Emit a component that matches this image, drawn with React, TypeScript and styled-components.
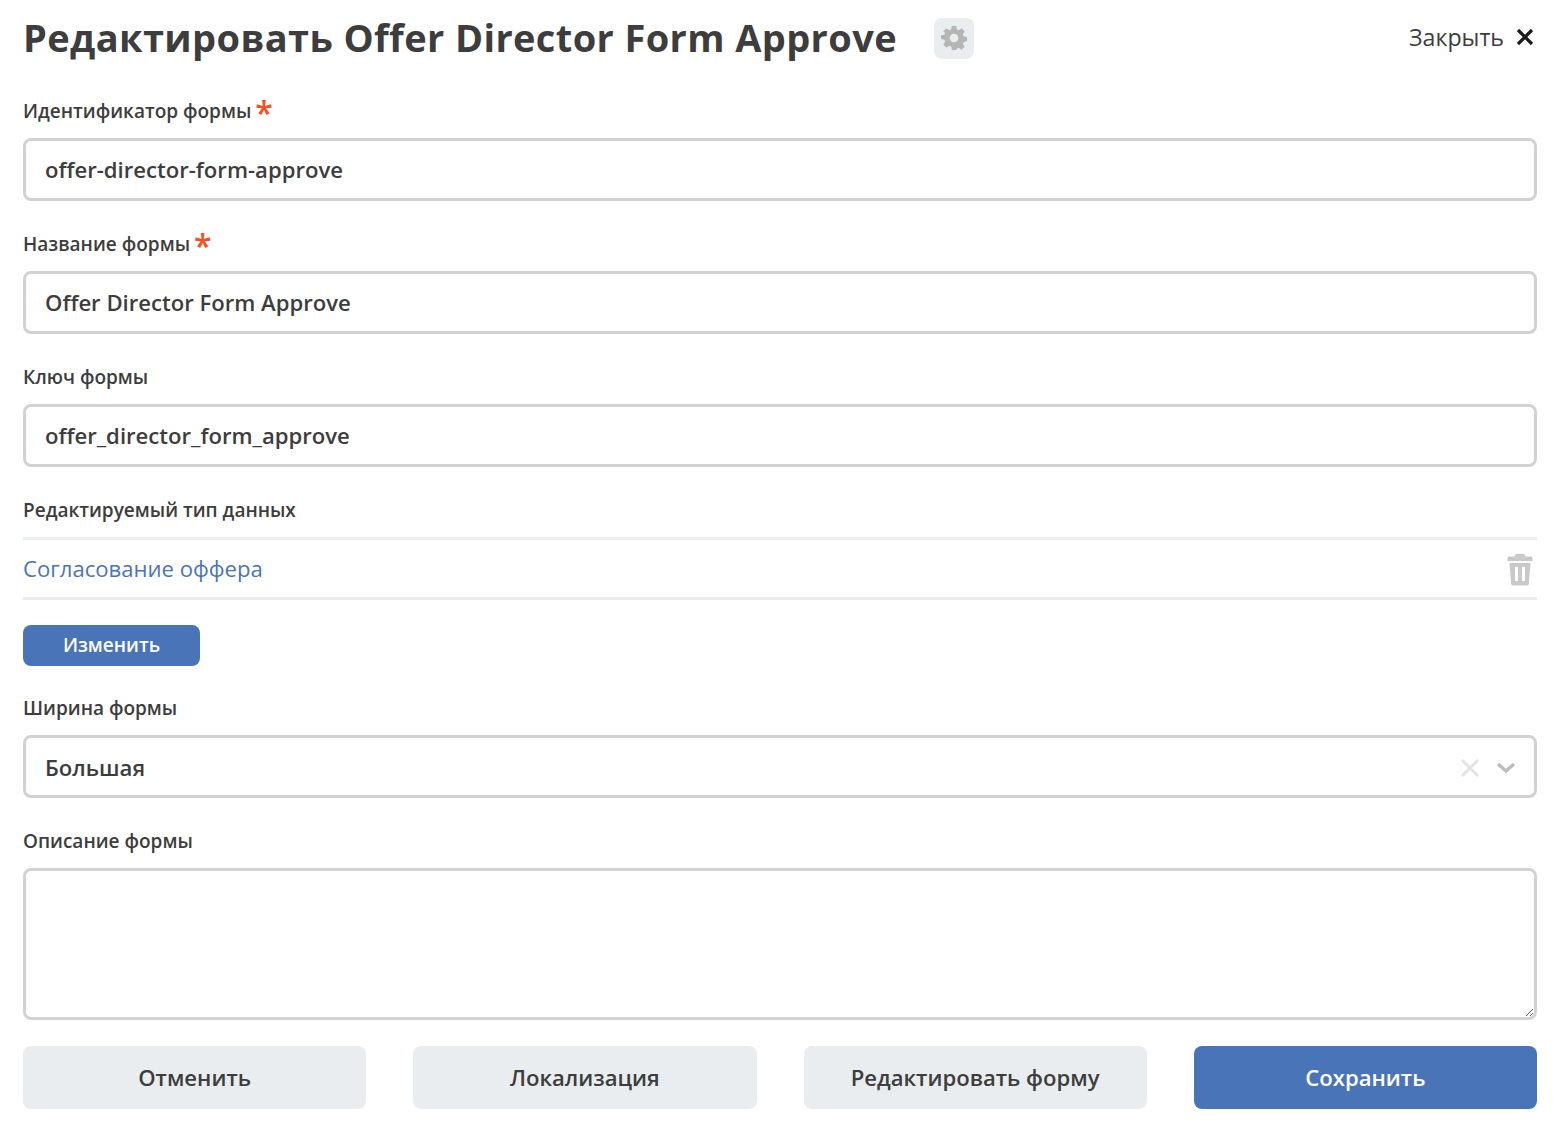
import styled, { createGlobalStyle } from "styled-components";

const GlobalStyle = createGlobalStyle`
  html, body {
    margin: 0;
    padding: 0;
    background: #fff;
    font-family: "Open Sans", "Liberation Sans", sans-serif;
    color: #3d3d3d;
  }
  * { box-sizing: border-box; }
`;

const GearIcon = () => (
  <svg width="26" height="26" viewBox="0 0 24 24" fill="#b5b5b5">
    <path
      fillRule="evenodd"
      d="M10 1h4l.6 3.1 1.8.8L19 3.1 21.9 6l-1.8 2.6.8 1.8 3.1.6v4l-3.1.6-.8 1.8 1.8 2.6-2.9 2.9-2.6-1.8-1.8.8L14 23h-4l-.6-3.1-1.8-.8L5 20.9 2.1 18l1.8-2.6-.8-1.8L0 13V9.5l3.1-.4.8-1.8L2.1 6 5 3.1l2.6 1.8 1.8-.8L10 1zm2 7a4 4 0 1 0 0 8 4 4 0 0 0 0-8z"
    />
  </svg>
);

const TrashSvg = styled.svg`
  margin-top: 2px;
`;

const TrashIcon = () => (
  <TrashSvg width="26" height="32" viewBox="0 0 26 32" fill="#c9c9c9">
    <path d="M10 0h6a1.5 1.5 0 0 1 1.5 2.5H24a1.5 1.5 0 0 1 1.5 1.5v3H.5V4A1.5 1.5 0 0 1 2 2.5h6.5A1.5 1.5 0 0 1 10 0z" />
    <path
      fillRule="evenodd"
      d="M2.5 9h21l-1.6 20.5A2 2 0 0 1 20 31.5H6a2 2 0 0 1-1.9-2L2.5 9zM8 13v14h3V13H8zm7 0v14h3V13h-3z"
    />
  </TrashSvg>
);

const Page = styled.div`
  width: 1559px;
  height: 1122px;
  padding: 0 22px 0 23px;
  display: flex;
  flex-direction: column;
  overflow: hidden;
`;

const Header = styled.header`
  height: 77px;
  display: flex;
  align-items: center;
`;

const Title = styled.h1`
  margin: 0 0 3px;
  font-size: 38px;
  line-height: 52px;
  font-weight: 700;
  letter-spacing: 0.38px;
  color: #3d3d3d;
  white-space: nowrap;
`;

const GearButton = styled.button`
  width: 40px;
  height: 41px;
  margin-left: 37px;
  padding: 0 0 2px;
  border: 0;
  border-radius: 8px;
  background: #e9edef;
  display: flex;
  align-items: center;
  justify-content: center;
`;

const CloseButton = styled.button`
  margin-left: auto;
  margin-right: 2px;
  padding: 0 0 3px;
  border: 0;
  background: none;
  display: flex;
  align-items: center;
  gap: 11px;
  font: 400 23.2px "Open Sans", sans-serif;
  color: #3d3d3d;
`;

const Field = styled.div<{ $gap?: number }>`
  display: flex;
  flex-direction: column;
  margin-bottom: ${(p) => p.$gap ?? 9}px;
`;

const Label = styled.label`
  height: 61px;
  padding-top: 6px;
  display: flex;
  align-items: center;
  gap: 4px;
  font-size: 19px;
  font-weight: 600;
  color: #3d3d3d;
`;

const Star = styled.span`
  font-size: 32px;
  line-height: 20px;
  font-weight: 600;
  color: #f4511e;
  transform: translateY(2px);
`;

const Input = styled.input`
  width: 100%;
  height: 63px;
  padding: 0 19px 2px;
  border: 3px solid #d2d2d2;
  border-radius: 8px;
  outline: none;
  font: 600 22.1px "Open Sans", sans-serif;
  color: #3d3d3d;
  background: #fff;
`;

const SelectBox = styled.div`
  height: 63px;
  padding: 0 19px 0;
  border: 3px solid #d2d2d2;
  border-radius: 8px;
  display: flex;
  align-items: center;
  font-size: 22.1px;
  font-weight: 600;
  color: #3d3d3d;
`;

const SelectIcons = styled.div`
  margin-left: auto;
  margin-right: -1px;
  padding-top: 2px;
  display: flex;
  align-items: center;
  gap: 15px;
`;

const LinkedRow = styled.div`
  height: 63px;
  padding-right: 4px;
  border-top: 3px solid #e9edef;
  border-bottom: 3px solid #e9edef;
  display: flex;
  align-items: center;
  justify-content: space-between;
`;

const TypeLink = styled.a`
  font-size: 22.1px;
  color: #4a74b8;
  margin-bottom: 2px;
`;

const SmallButton = styled.button`
  align-self: flex-start;
  width: 177px;
  height: 41px;
  margin-top: 25px;
  padding: 0 0 2px;
  border: 0;
  border-radius: 8px;
  background: #4a74b8;
  color: #fff;
  font: 600 19px "Open Sans", sans-serif;
`;

const TextArea = styled.textarea`
  display: block;
  width: 100%;
  height: 152px;
  padding: 16px 20px;
  border: 3px solid #d2d2d2;
  border-radius: 8px;
  outline: none;
  background: #fff;
`;

const Footer = styled.footer`
  margin-top: 26px;
  display: grid;
  grid-template-columns: repeat(4, 1fr);
  column-gap: 47px;
`;

const FooterButton = styled.button<{ $primary?: boolean }>`
  height: 63px;
  padding: 0 0 2px;
  border: 0;
  border-radius: 8px;
  background: ${(p) => (p.$primary ? "#4a74b8" : "#e9edef")};
  color: ${(p) => (p.$primary ? "#fff" : "#3d3d3d")};
  font: 600 22.1px "Open Sans", sans-serif;
`;

const App = () => {
  return (
    <>
      <GlobalStyle />
      <Page>
        <Header>
          <Title>Редактировать Offer Director Form Approve</Title>
          <GearButton>
            <GearIcon />
          </GearButton>
          <CloseButton>
            Закрыть
            <svg width="20" height="20" viewBox="0 0 20 20" stroke="#1c1c1c" strokeWidth="3.2" fill="none">
              <path d="M3 3l14 14M17 3L3 17" />
            </svg>
          </CloseButton>
        </Header>

        <Field>
          <Label>
            Идентификатор формы <Star>*</Star>
          </Label>
          <Input readOnly value="offer-director-form-approve" />
        </Field>
        <Field>
          <Label>
            Название формы <Star>*</Star>
          </Label>
          <Input readOnly value="Offer Director Form Approve" />
        </Field>
        <Field>
          <Label>Ключ формы</Label>
          <Input readOnly value="offer_director_form_approve" />
        </Field>
        <Field $gap={8}>
          <Label>Редактируемый тип данных</Label>
          <LinkedRow>
            <TypeLink>Согласование оффера</TypeLink>
            <TrashIcon />
          </LinkedRow>
          <SmallButton>Изменить</SmallButton>
        </Field>
        <Field>
          <Label>Ширина формы</Label>
          <SelectBox>
            Большая
            <SelectIcons>
              <svg width="22" height="22" viewBox="0 0 22 22" stroke="#e3e3e3" strokeWidth="3" fill="none">
                <path d="M3 3l16 16M19 3L3 19" />
              </svg>
              <svg width="20" height="12" viewBox="0 0 20 12" stroke="#bdbdbd" strokeWidth="3.4" fill="none">
                <path d="M2 2l8 7 8-7" />
              </svg>
            </SelectIcons>
          </SelectBox>
        </Field>
        <Field $gap={0}>
          <Label>Описание формы</Label>
          <TextArea readOnly />
        </Field>

        <Footer>
          <FooterButton>Отменить</FooterButton>
          <FooterButton>Локализация</FooterButton>
          <FooterButton>Редактировать форму</FooterButton>
          <FooterButton $primary>Сохранить</FooterButton>
        </Footer>
      </Page>
    </>
  );
};

export default App;
